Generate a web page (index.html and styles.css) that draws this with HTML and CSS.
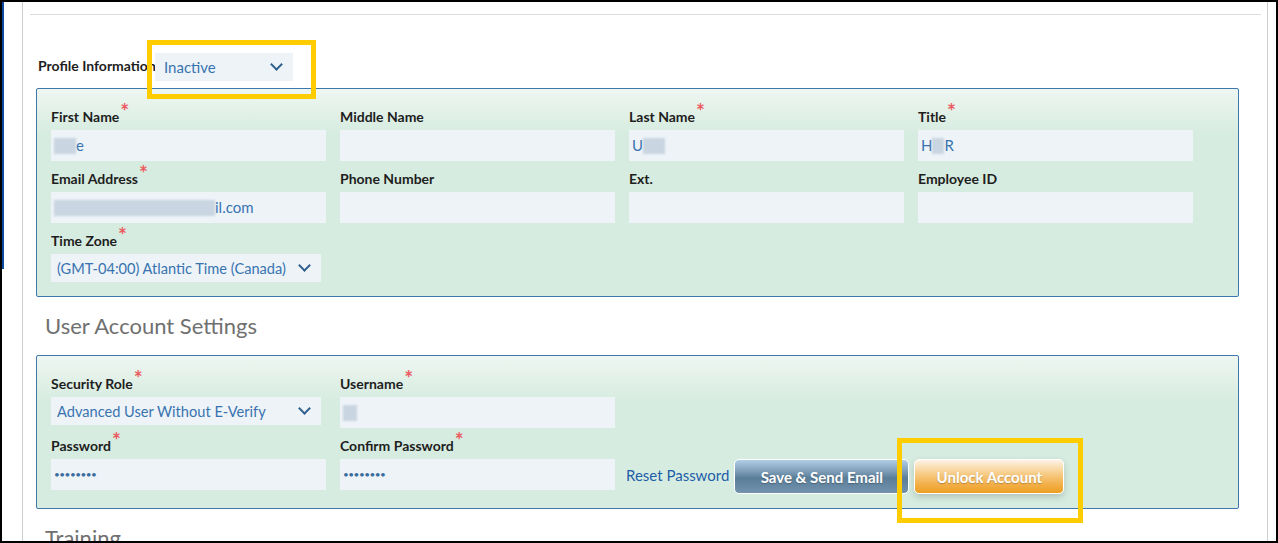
FILE: index.html
```html
<!DOCTYPE html>
<html lang="en">
<head>
  <meta charset="UTF-8">
  <title>Edit User</title>
  <link rel="stylesheet" href="styles.css">
</head>
<body>
  <div class="screen">
    <div class="edge"></div>
    <div class="page">
      <div class="rule"></div>

      <div class="profile-row">
        <span class="profile-label">Profile Information</span>
        <div class="select status">Inactive <span class="chev"></span></div>
        <div class="callout callout-status"></div>
      </div>

      <div class="panel">
        <div class="grid">
          <div class="field">
            <label>First Name<span class="req">*</span></label>
            <div class="input"><span class="redact w22"></span>e</div>
          </div>
          <div class="field">
            <label>Middle Name</label>
            <div class="input"></div>
          </div>
          <div class="field">
            <label>Last Name<span class="req">*</span></label>
            <div class="input">U<span class="redact w22"></span></div>
          </div>
          <div class="field">
            <label>Title<span class="req">*</span></label>
            <div class="input">H<span class="redact w12"></span>R</div>
          </div>

          <div class="field">
            <label>Email Address<span class="req">*</span></label>
            <div class="input"><span class="redact w160"></span>il.com</div>
          </div>
          <div class="field">
            <label>Phone Number</label>
            <div class="input"></div>
          </div>
          <div class="field">
            <label>Ext.</label>
            <div class="input"></div>
          </div>
          <div class="field">
            <label>Employee ID</label>
            <div class="input"></div>
          </div>

          <div class="field">
            <label>Time Zone<span class="req">*</span></label>
            <div class="select wide">(GMT-04:00) Atlantic Time (Canada) <span class="chev"></span></div>
          </div>
        </div>
      </div>

      <h2>User Account Settings</h2>

      <div class="panel">
        <div class="grid">
          <div class="field">
            <label>Security Role<span class="req">*</span></label>
            <div class="select wide role">Advanced User Without E-Verify <span class="chev"></span></div>
          </div>
          <div class="field">
            <label>Username<span class="req">*</span></label>
            <div class="input"><span class="redact w14"></span></div>
          </div>
          <div class="field"></div>
          <div class="field"></div>

          <div class="field">
            <label>Password<span class="req">*</span></label>
            <div class="input dots">&bull;&bull;&bull;&bull;&bull;&bull;&bull;&bull;</div>
          </div>
          <div class="field">
            <label>Confirm Password<span class="req">*</span></label>
            <div class="input dots">&bull;&bull;&bull;&bull;&bull;&bull;&bull;&bull;</div>
          </div>
          <div class="actions">
            <a class="link" href="#">Reset Password</a>
            <button class="btn btn-blue">Save &amp; Send Email</button>
            <div class="unlock-wrap">
              <button class="btn btn-orange">Unlock Account</button>
              <div class="callout callout-unlock"></div>
            </div>
          </div>
        </div>
      </div>

      <h2>Training</h2>
    </div>
  </div>
</body>
</html>
```

FILE: styles.css
```css
body {
  margin: 0;
  background-color: #000;
  font-family: 'Lato', 'Noto Sans', sans-serif;
}

.screen {
  display: flex;
  margin: 2px 2px 0 2px;
  height: 539px;
  background-color: #fff;
  overflow: hidden;
}

.edge {
  width: 2px;
  height: 267px;
  background-color: #0b4aa2;
  flex: none;
}

.page {
  width: 1244px;
  margin-left: 18px;
  border-left: 1px solid #cfcfcf;
  border-right: 1px solid #cfcfcf;
  flex: none;
}

.rule {
  height: 1px;
  background-color: #dcdcdc;
  margin: 12px 6px 0 7px;
}

.profile-row {
  position: relative;
  display: flex;
  align-items: center;
  margin-top: 38px;
  padding-left: 15px;
}

.profile-label {
  font-size: 14px;
  font-weight: bold;
  color: #1e1e1e;
  width: 117px;
  margin-top: -3px;
  white-space: nowrap;
}

.select {
  display: flex;
  align-items: center;
  justify-content: space-between;
  box-sizing: border-box;
  height: 28px;
  padding: 0 12px 0 6px;
  background-color: #eef3f8;
  color: #3873b0;
  font-size: 15px;
  white-space: nowrap;
}

.select.status {
  width: 138px;
  padding-left: 9px;
}

.select.wide {
  width: 270px;
  font-size: 14.6px;
}

.select.role {
  margin-top: 7px;
}

.chev {
  width: 7px;
  height: 7px;
  border-right: 2px solid #2f5f8c;
  border-bottom: 2px solid #2f5f8c;
  transform: rotate(45deg);
  margin-top: -5px;
  flex: none;
}

.callout {
  position: absolute;
  border: 5px solid #ffcc00;
  box-sizing: border-box;
  pointer-events: none;
}

.callout-status {
  left: 124px;
  top: -13px;
  width: 169px;
  height: 59px;
}

.panel {
  margin: 7px 28px 0 13px;
  border: 1px solid #3e77ab;
  border-radius: 2px;
  background: linear-gradient(to bottom, #eef6f1 0px, #d7ece0 45px, #d7ece0 100%);
  padding: 10px 14px 14px 14px;
}

.grid {
  display: grid;
  grid-template-columns: repeat(4, 275px);
  column-gap: 14px;
}

.field label {
  display: block;
  margin-top: 8px;
  height: 20px;
  line-height: 20px;
  font-size: 14px;
  font-weight: bold;
  color: #1e1e1e;
  white-space: nowrap;
}

.field label + .input,
.field label + .select {
  margin-top: 3px;
}

.req {
  color: #ea5a60;
  font-size: 21px;
  font-weight: bold;
  vertical-align: 3px;
  line-height: 0;
  margin-left: 1px;
}

.input {
  box-sizing: border-box;
  height: 31px;
  padding: 0 3px;
  background-color: #eef3f8;
  color: #3873b0;
  font-size: 15px;
  line-height: 31px;
  white-space: nowrap;
  overflow: hidden;
}

.input.dots {
  font-size: 10px;
  letter-spacing: -0.5px;
  color: #3a6d9e;
}

.redact {
  display: inline-block;
  height: 16px;
  vertical-align: -3px;
  background-color: #c9d5e0;
  filter: blur(1px);
}

.w12 { width: 12px; }
.w14 { width: 14px; }
.w22 { width: 22px; }
.w160 { width: 161px; }

h2 {
  margin: 14px 0 14px 22px;
  font-size: 22px;
  font-weight: normal;
  line-height: 30px;
  color: #707070;
}

.actions {
  grid-column: 3 / 5;
  display: flex;
  align-items: center;
  margin-left: -3px;
  margin-top: 31px;
}

.link {
  color: #1d5ea8;
  text-decoration: none;
  font-size: 15px;
  margin-right: 5px;
  margin-top: -3px;
}

.btn {
  height: 35px;
  border: 1px solid #fff;
  border-radius: 5px;
  color: #fff;
  font-family: inherit;
  font-size: 15px;
  font-weight: bold;
  text-shadow: 0 1px 1px rgba(0, 0, 0, 0.25);
  cursor: pointer;
}

.btn-blue {
  width: 175px;
  background: linear-gradient(to bottom, #b0cde6 0%, #7d9db7 35%, #5a7d98 55%, #7393ad 100%);
}

.unlock-wrap {
  position: relative;
  margin-left: 5px;
}

.btn-orange {
  width: 150px;
  background: linear-gradient(to bottom, #fdf3e6 0%, #f7cd8a 40%, #f2ae46 75%, #ed9f22 100%);
  box-shadow: 0 3px 7px rgba(0, 0, 0, 0.18);
}

.callout-unlock {
  left: -17px;
  top: -21px;
  width: 186px;
  height: 85px;
}
```
